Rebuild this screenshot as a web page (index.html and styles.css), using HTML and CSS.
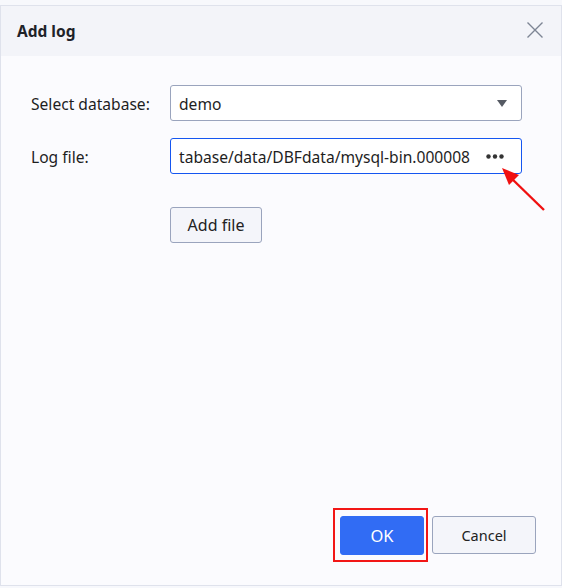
FILE: index.html
```html
<!DOCTYPE html>
<html>
<head>
<meta charset="utf-8">
<link rel="stylesheet" href="styles.css">
</head>
<body>
<div class="dialog">
  <div class="header">
    <span class="title">Add log</span>
    <svg class="close" width="18" height="18" viewBox="0 0 18 18"><path d="M1.5 1.5 L16.5 16.5 M16.5 1.5 L1.5 16.5" stroke="#7d8594" stroke-width="1.4" fill="none"/></svg>
  </div>
  <div class="content">
    <div class="form">
      <label class="label">Select database:</label>
      <div class="field select">
        <span class="value">demo</span>
        <svg class="caret" width="10" height="8" viewBox="0 0 10 8"><path d="M0 0 H10 L5 7 Z" fill="#555a63"/></svg>
      </div>
      <label class="label">Log file:</label>
      <div class="field file">
        <span class="value">tabase/data/DBFdata/mysql-bin.000008</span>
        <svg class="dots" width="18" height="5" viewBox="0 0 18 5"><circle cx="2.5" cy="2.5" r="2.2" fill="#333"/><circle cx="9" cy="2.5" r="2.2" fill="#333"/><circle cx="15.5" cy="2.5" r="2.2" fill="#333"/></svg>
      </div>
      <span></span>
      <div class="addrow"><button class="btn add">Add file</button></div>
    </div>
    <div class="footer">
      <button class="btn ok">OK</button>
      <button class="btn cancel">Cancel</button>
    </div>
  </div>
  <div class="mark"></div>
  <svg class="arrow" width="60" height="60" viewBox="0 0 60 60">
    <path d="M44 44 L9 10" stroke="#f01010" stroke-width="2.4" fill="none"/>
    <path d="M2 2 L19 9 L9 19 Z" fill="#f01010"/>
  </svg>
</div>
</body>
</html>
```
FILE: styles.css
```css
html, body {
  margin: 0;
  padding: 0;
  background: #f7f8fc;
}
body {
  font-family: "Noto Sans", "Open Sans", sans-serif;
  color: #1e1e1e;
  padding: 5px 0 1px 0;
}
.dialog {
  position: relative;
  height: 581px;
  border: 1px solid #dfe2ec;
  background: #fbfbfe;
  display: flex;
  flex-direction: column;
  box-sizing: border-box;
}
.header {
  height: 50px;
  background: #f3f4f9;
  display: flex;
  align-items: center;
  justify-content: space-between;
  padding: 0 17px 0 16px;
  flex: none;
}
.title {
  font-weight: 700;
  font-size: 15.5px;
  color: #1f2329;
  margin-top: -1px;
}
.close {
  margin-top: -2px;
}
.content {
  flex: 1;
  display: flex;
  flex-direction: column;
  padding: 29px 38px 30px 30px;
}
.form {
  display: grid;
  grid-template-columns: 139px 352px;
  row-gap: 17px;
  align-items: center;
}
.label {
  font-size: 15.6px;
  color: #1e1e1e;
  padding-top: 1px;
}
.field {
  height: 36px;
  box-sizing: border-box;
  border: 1px solid #9aa4bd;
  border-radius: 3px;
  background: #fff;
  display: flex;
  align-items: center;
  justify-content: space-between;
  padding: 1px 14px 0 8px;
  font-size: 15.6px;
}
.field.file {
  border-color: #1556f0;
  padding-right: 17px;
}
.caret {
  margin-top: 0;
}
.dots {
  margin-top: 0;
}
.addrow {
  padding-top: 16px;
}
.btn {
  font-family: "Noto Sans", "Open Sans", sans-serif;
  font-size: 16px;
  box-sizing: border-box;
  border: 1px solid #9aa4bd;
  border-radius: 3px;
  background: #f4f5fa;
  color: #222;
  cursor: pointer;
}
.add {
  width: 92px;
  height: 36px;
}
.footer {
  margin-top: auto;
  display: flex;
  justify-content: flex-end;
  gap: 8px;
  margin-right: -13px;
}
.ok {
  width: 84px;
  height: 39px;
  background: #316cf4;
  border-color: #316cf4;
  color: #fff;
  font-size: 16.5px;
}
.cancel {
  width: 104px;
  height: 38px;
  font-size: 14.5px;
}
.mark {
  position: absolute;
  left: 332px;
  top: 502px;
  width: 91px;
  height: 50px;
  border: 2px solid #f21616;
}
.arrow {
  position: absolute;
  left: 499px;
  top: 160px;
}
```
